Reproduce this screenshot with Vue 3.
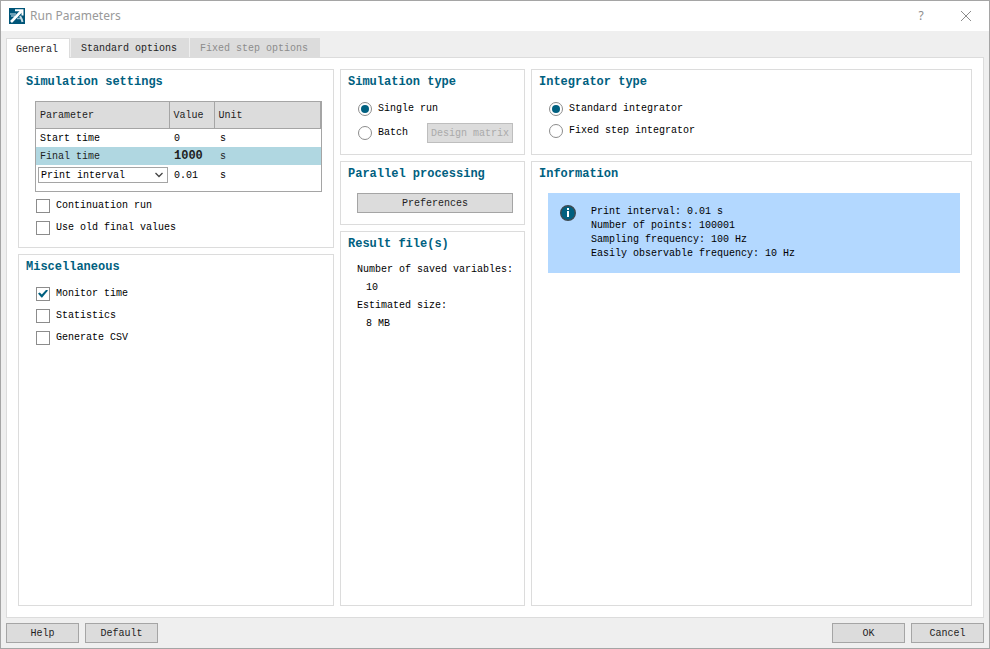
<script setup>
import { ref } from 'vue'

const tab = ref('General')
const tabs = [
  { name: 'General', disabled: false },
  { name: 'Standard options', disabled: false },
  { name: 'Fixed step options', disabled: true },
]
const interval = ref('Print interval')
const continuation = ref(false)
const oldFinal = ref(false)
const misc = ref([
  { id: 'monitor', label: 'Monitor time', on: true },
  { id: 'stats', label: 'Statistics', on: false },
  { id: 'csv', label: 'Generate CSV', on: false },
])
const runType = ref('single')
const integrator = ref('standard')
const info = [
  'Print interval: 0.01 s',
  'Number of points: 100001',
  'Sampling frequency: 100 Hz',
  'Easily observable frequency: 10 Hz',
]
</script>

<template>
  <div class="dialog">
    <header class="titlebar">
      <svg class="logo" viewBox="0 0 16 16" aria-hidden="true">
        <rect width="16" height="16" fill="#005578" />
        <path d="M1 6h6M2 8h4M8 10.500h4" stroke="#8fb8ca" stroke-width="1.600" fill="none" />
        <path d="M11 8c1 1.500 2 3 2.500 6" stroke="#c4dae3" stroke-width="2" fill="none" />
        <path d="M2 14 12.500 3" stroke="#fff" stroke-width="2.600" fill="none" />
        <path d="M6 2.200h7.500v5.300" stroke="#fff" stroke-width="2" fill="none" />
      </svg>
      <h1>Run Parameters</h1>
      <button class="win help" aria-label="Help">?</button>
      <button class="win" aria-label="Close">
        <svg viewBox="0 0 12 12" width="12" height="12"><path d="M1 1l10 10M11 1 1 11" stroke="#8c8c8c" fill="none" /></svg>
      </button>
    </header>

    <nav class="tabs" role="tablist">
      <button
        v-for="t in tabs"
        :key="t.name"
        role="tab"
        class="tab"
        :class="{ active: tab === t.name }"
        :aria-selected="tab === t.name"
        :disabled="t.disabled"
        @click="tab = t.name"
      >{{ t.name }}</button>
    </nav>

    <main class="pane">
      <div class="col">
        <section class="panel">
          <h2>Simulation settings</h2>
          <div class="tablebox">
            <table>
              <colgroup><col class="c1" /><col class="c2" /><col /></colgroup>
              <thead>
                <tr><th>Parameter</th><th>Value</th><th>Unit</th></tr>
              </thead>
              <tbody>
                <tr><td>Start time</td><td>0</td><td>s</td></tr>
                <tr class="selected"><td>Final time</td><td><b>1000</b></td><td>s</td></tr>
                <tr class="tall">
                  <td class="pick">
                    <div class="combo">
                      <select v-model="interval" aria-label="Interval kind">
                        <option>Print interval</option>
                      </select>
                      <svg viewBox="0 0 8 6" width="8" height="6" aria-hidden="true"><path d="M.5 1 4 4.500 7.500 1" stroke="#444" stroke-width="1.300" fill="none" /></svg>
                    </div>
                  </td>
                  <td>0.01</td>
                  <td>s</td>
                </tr>
              </tbody>
            </table>
          </div>
          <div class="options">
            <label class="opt"><input v-model="continuation" type="checkbox" />Continuation run</label>
            <label class="opt"><input v-model="oldFinal" type="checkbox" />Use old final values</label>
          </div>
        </section>

        <section class="panel grow misc">
          <h2>Miscellaneous</h2>
          <div class="options">
            <label v-for="m in misc" :key="m.id" class="opt"><input v-model="m.on" type="checkbox" />{{ m.label }}</label>
          </div>
        </section>
      </div>

      <div class="col">
        <section class="panel type">
          <h2>Simulation type</h2>
          <div class="options runs">
            <label class="opt"><input v-model="runType" type="radio" name="run" value="single" />Single run</label>
            <div class="batch">
              <label class="opt"><input v-model="runType" type="radio" name="run" value="batch" />Batch</label>
              <button class="btn matrix" :disabled="runType !== 'batch'">Design matrix</button>
            </div>
          </div>
        </section>
        <section class="panel parallel">
          <h2>Parallel processing</h2>
          <button class="btn">Preferences</button>
        </section>
        <section class="panel grow result">
          <h2>Result file(s)</h2>
          <dl>
            <dt>Number of saved variables:</dt>
            <dd>10</dd>
            <dt>Estimated size:</dt>
            <dd>8 MB</dd>
          </dl>
        </section>
      </div>

      <div class="col">
        <section class="panel type">
          <h2>Integrator type</h2>
          <div class="options">
            <label class="opt"><input v-model="integrator" type="radio" name="integ" value="standard" />Standard integrator</label>
            <label class="opt"><input v-model="integrator" type="radio" name="integ" value="fixed" />Fixed step integrator</label>
          </div>
        </section>
        <section class="panel grow">
          <h2>Information</h2>
          <div class="info">
            <svg viewBox="0 0 16 16" width="16" height="16" aria-hidden="true">
              <circle cx="8" cy="8" r="7.300" fill="#006080" stroke="#3d4a52" stroke-width="1.400" />
              <rect x="7" y="3" width="2" height="2" fill="#fff" />
              <rect x="7" y="6" width="2" height="6" fill="#fff" />
            </svg>
            <div class="lines"><p v-for="line in info" :key="line">{{ line }}</p></div>
          </div>
        </section>
      </div>
    </main>

    <footer class="actions">
      <button class="btn">Help</button>
      <button class="btn">Default</button>
      <span class="spacer"></span>
      <button class="btn">OK</button>
      <button class="btn">Cancel</button>
    </footer>
  </div>
</template>

<style>
body { margin: 0; }
</style>

<style scoped>
* { box-sizing: border-box; }
.dialog {
  display: flex;
  flex-direction: column;
  min-height: 100vh;
  border: 1px solid #a5a5a5;
  background: #efefef;
  color: #000;
  font: 10px/18px "Liberation Mono", monospace;
}
button, input, select { font: inherit; color: inherit; margin: 0; }
h1, h2, p, dl, dd { margin: 0; }
.titlebar {
  display: flex;
  align-items: center;
  height: 30px;
  padding: 0 8px;
  background: #fff;
}
.logo { width: 16px; height: 16px; }
h1 {
  flex: 1;
  padding-left: 5px;
  color: #999;
  font: 12px/16px "Noto Sans", sans-serif;
}
.win {
  display: flex;
  align-items: center;
  justify-content: center;
  width: 30px;
  height: 28px;
  padding: 0;
  border: 0;
  background: none;
  color: #8c8c8c;
}
.help { margin-right: 15px; font: 12px/16px "Noto Sans", sans-serif; }
.tabs { display: flex; gap: 1px; height: 26px; padding: 7px 5px 0; }
.tab {
  height: 19px;
  padding: 2px 12px 0 10px;
  border: 0;
  background: #dcdcdc;
  color: #1e1e1e;
  line-height: 17px;
  white-space: nowrap;
}
.tab.active {
  z-index: 1;
  height: 20px;
  padding: 1px 11px 0 9px;
  border: 1px solid #dcdcdc;
  border-bottom: 0;
  background: #fff;
}
.tab:disabled { color: #8c8c8c; }
.pane {
  display: grid;
  flex: 1;
  grid-template-columns: 316px 185px 1fr;
  gap: 6px;
  margin: 0 5px;
  padding: 11px;
  border: 1px solid #dcdcdc;
  background: #fff;
}
.col { display: flex; flex-direction: column; gap: 6px; min-width: 0; }
.panel { padding: 0 11px 10px 16px; border: 1px solid #dcdcdc; }
.grow { flex: 1; }
.type { height: 86px; }
h2 {
  height: 31px;
  margin-left: -9px;
  color: #006080;
  font: bold 12px/24px "Liberation Mono", monospace;
}
.type h2, .misc h2 { height: 30px; }
.result h2 { height: 29px; }
.tablebox { padding-bottom: 6px; border: 1px solid #a5a5a5; }
table { width: 100%; border-collapse: collapse; table-layout: fixed; }
.c1 { width: 133px; }
.c2 { width: 45px; }
th {
  height: 26px;
  padding: 2px 4px 0;
  border: solid #a5a5a5;
  border-width: 0 1px 1px 0;
  background: #dcdcdc;
  color: #1e1e1e;
  font-weight: normal;
  text-align: left;
}
td { height: 18px; padding: 2px 5px 0; line-height: 16px; }
td:first-child { padding-left: 4px; }
td b { font-size: 12px; line-height: 14px; }
td:last-child { padding-left: 6px; }
.selected { background: #b0d7e1; color: #1e1e1e; }
.tall td { height: 20px; }
.tall .pick { padding: 0 1px 0 2px; }
.combo {
  display: grid;
  align-items: center;
  height: 16px;
  border: 1px solid #a5a5a5;
  background: #fff;
}
.combo select {
  grid-area: 1 / 1;
  width: 100%;
  height: 14px;
  padding: 1px 2px 0;
  border: 0;
  background: none;
  line-height: 13px;
  appearance: none;
}
.combo svg { grid-area: 1 / 1; justify-self: end; margin-right: 4px; pointer-events: none; }
.options { display: flex; flex-direction: column; gap: 4px; padding-left: 1px; }
.runs { gap: 5px; }
.tablebox + .options { padding-top: 5px; }
.opt { display: flex; align-items: center; gap: 6px; height: 18px; line-height: 20px; white-space: nowrap; }
.opt input {
  display: grid;
  place-content: center;
  width: 14px;
  height: 14px;
  border: 1px solid #8c8c8c;
  background: #fff;
  appearance: none;
}
.opt input[type="radio"] { border-radius: 50%; }
.opt input[type="radio"]:checked::before {
  content: "";
  width: 8px;
  height: 8px;
  border-radius: 50%;
  background: #006080;
}
.opt input[type="checkbox"]:checked::before {
  content: "";
  width: 10px;
  height: 8px;
  background: #006080;
  clip-path: polygon(0 50%, 18% 36%, 38% 62%, 84% 0, 100% 14%, 42% 100%, 34% 100%);
}
.batch { display: flex; align-items: center; justify-content: space-between; height: 20px; }
.btn {
  height: 20px;
  padding: 2px 0 0;
  border: 1px solid #a5a5a5;
  background: #dcdcdc;
  color: #1e1e1e;
  line-height: 16px;
}
.btn:disabled { border-color: #bebebe; color: #aaa; }
.matrix { width: 86px; }
.parallel { height: 64px; }
.parallel .btn { width: 100%; }
dl { white-space: nowrap; }
dd { padding-left: 9px; }
.info {
  display: flex;
  gap: 15px;
  min-height: 80px;
  padding: 12px;
  background: #b3d8ff;
  line-height: 14px;
}
.info svg { flex: none; }
.actions { display: flex; gap: 6px; padding: 5px; }
.actions .btn { width: 73px; }
.spacer { flex: 1; }
</style>
